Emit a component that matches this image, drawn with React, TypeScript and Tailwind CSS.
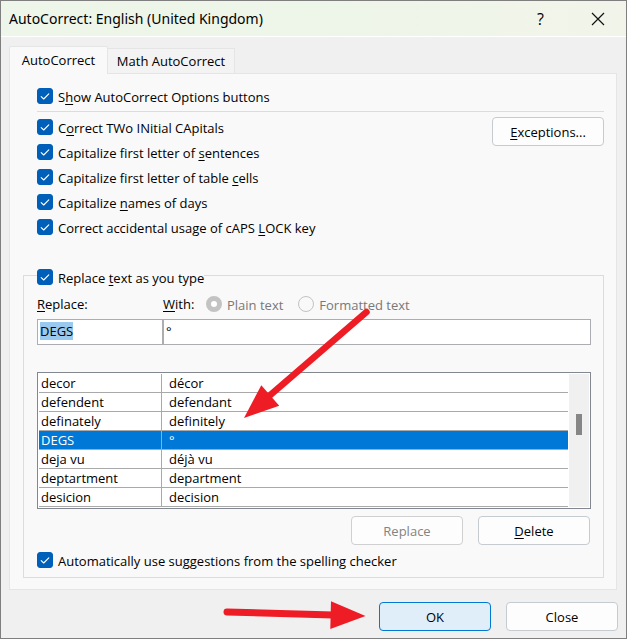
import { useEffect, useId, useRef } from "react";
import type { ReactNode } from "react";

const corrections = [
  ["decor", "décor"],
  ["defendent", "defendant"],
  ["definately", "definitely"],
  ["DEGS", "°"],
  ["deja vu", "déjà vu"],
  ["deptartment", "department"],
  ["desicion", "decision"],
];

/** Underlined access key inside a label. */
function Key({ children }: { children: ReactNode }) {
  return <span className="underline decoration-1 underline-offset-2">{children}</span>;
}

function CheckRow({ children }: { children: ReactNode }) {
  const id = useId();
  return (
    <div className="flex items-center gap-[5px]">
      <span className="grid size-4 shrink-0">
        <input
          id={id}
          type="checkbox"
          defaultChecked
          className="peer col-start-1 row-start-1 size-4 appearance-none rounded-[3px] border border-[#868686] bg-white checked:border-[#005fb8] checked:bg-[#005fb8]"
        />
        <svg
          viewBox="0 0 16 16"
          className="pointer-events-none col-start-1 row-start-1 hidden size-4 peer-checked:block"
          fill="none"
          stroke="#fff"
          strokeWidth="1.1"
          strokeLinecap="round"
          strokeLinejoin="round"
        >
          <path d="M4.2 8.6 L6.7 11 L11.8 5.8" />
        </svg>
      </span>
      <label htmlFor={id} className="pt-0.5 leading-4 whitespace-nowrap">
        {children}
      </label>
    </div>
  );
}

function RadioRow({ children, checked }: { children: ReactNode; checked?: boolean }) {
  const id = useId();
  return (
    <div className="flex items-center gap-[5px]">
      <input
        id={id}
        type="radio"
        name="format"
        disabled
        defaultChecked={checked}
        className="size-4 shrink-0 appearance-none rounded-full border border-[#c3c3c3] checked:border-[5px] checked:bg-white"
      />
      <label htmlFor={id} className="pt-0.5 leading-4 text-[#787878]">
        {children}
      </label>
    </div>
  );
}

function Button({ children, primary, disabled }: { children: ReactNode; primary?: boolean; disabled?: boolean }) {
  return (
    <button
      type="button"
      disabled={disabled}
      className={
        "h-[29px] w-28 shrink-0 rounded-[4px] border pt-px leading-4 " +
        (primary
          ? "border-[#0078d4] bg-[#e0eef9]"
          : disabled
            ? "border-[#d0d0d0] bg-[#fdfdfd] text-[#838383]"
            : "border-[#c6cbd0] bg-[#fdfdfd]")
      }
    >
      {children}
    </button>
  );
}

function Arrows() {
  return (
    <svg
      className="pointer-events-none absolute -top-px -left-px"
      width="627"
      height="639"
      viewBox="0 0 627 639"
      fill="#ee1c25"
      stroke="#ee1c25"
      aria-hidden="true"
    >
      <path d="M366.5 312 L268 397" strokeWidth="6.5" strokeLinecap="round" />
      <path d="M244 418 L261.3 385.3 L279.2 405.7 Z" stroke="none" />
      <path d="M227 612 L333 615" strokeWidth="7" strokeLinecap="round" />
      <path d="M365.5 616 L331 601.3 L330.3 629 Z" stroke="none" />
    </svg>
  );
}

export default function App() {
  const replaceRef = useRef<HTMLInputElement>(null);

  useEffect(() => {
    replaceRef.current?.focus();
    replaceRef.current?.select();
  }, []);

  return (
    <div className="relative flex min-h-screen flex-col border border-[#7f7f7f] bg-[#f0f0f0] font-['Open_Sans','Segoe_UI',sans-serif] text-[13px] text-black">
      <header className="flex h-9 items-center border-b border-white bg-linear-to-r from-[#eef5ea] via-[#edf6e8] to-[#f2f4ea] pl-2">
        <h1 className="flex-1 font-['Noto_Sans','Segoe_UI',sans-serif] text-[14px] leading-5">
          AutoCorrect: English (United Kingdom)
        </h1>
        <button type="button" aria-label="Help" className="w-[57px] text-[16px] leading-5">
          ?
        </button>
        <button type="button" aria-label="Close window" className="flex w-[57px] justify-center">
          <svg width="14" height="14" viewBox="0 0 14 14" stroke="#111" strokeWidth="1.2">
            <path d="M1 1 L13 13 M13 1 L1 13" />
          </svg>
        </button>
      </header>

      <main className="flex flex-1 flex-col px-2 pt-[9px] pb-[7px]">
        <div role="tablist" className="flex items-end">
          <button
            type="button"
            role="tab"
            aria-selected="true"
            className="relative -mb-px h-7 w-[99px] rounded-t-[2px] border border-b-0 border-[#e5e5e5] bg-[#f9f9f9] pt-px"
          >
            AutoCorrect
          </button>
          <button
            type="button"
            role="tab"
            aria-selected="false"
            className="h-[25px] w-[127px] border border-b-0 border-l-0 border-[#e5e5e5] bg-[#f3f3f3] pt-0.5"
          >
            Math AutoCorrect
          </button>
        </div>

        <section
          role="tabpanel"
          className="mr-px flex flex-1 flex-col border border-[#e5e5e5] bg-[#f9f9f9] pt-[13px] pr-3 pb-[11px] pl-[13px]"
        >
          <div className="ml-3.5 border-b border-[#dcdcdc] pb-1.5">
            <CheckRow>
              S<Key>h</Key>ow AutoCorrect Options buttons
            </CheckRow>
          </div>
          <div className="ml-3.5 flex items-start justify-between pt-[5px]">
            <div className="flex flex-col gap-[7px] pt-px">
              <CheckRow>
                C<Key>o</Key>rrect TWo INitial CApitals
              </CheckRow>
              <CheckRow>
                Capitalize first letter of <Key>s</Key>entences
              </CheckRow>
              <CheckRow>
                Capitalize first letter of table <Key>c</Key>ells
              </CheckRow>
              <CheckRow>
                Capitalize <Key>n</Key>ames of days
              </CheckRow>
              <CheckRow>
                Correct accidental usage of cAPS <Key>L</Key>OCK key
              </CheckRow>
            </div>
            <Button>
              <Key>E</Key>xceptions...
            </Button>
          </div>

          <fieldset className="mt-7 flex flex-1 flex-col border border-[#dcdcdc] pr-3 pb-2 pl-[13px]">
            <legend className="flex h-[22px] items-center pt-1">
              <CheckRow>
                Replace <Key>t</Key>ext as you type
              </CheckRow>
            </legend>

            <div className="flex items-center pt-[9px]">
              <label htmlFor="replace" className="w-[126px] leading-4">
                <Key>R</Key>eplace:
              </label>
              <label htmlFor="with" className="w-[43px] leading-4">
                <Key>W</Key>ith:
              </label>
              <div className="flex gap-[15px]">
                <RadioRow checked>Plain text</RadioRow>
                <RadioRow>Formatted text</RadioRow>
              </div>
            </div>

            <div className="mt-1.5 flex">
              <input
                id="replace"
                ref={replaceRef}
                defaultValue="DEGS"
                className="h-[26px] w-[126px] border border-[#abadb3] bg-white px-0.5 pb-0.5 caret-transparent outline-none selection:bg-[#99c9ef] selection:text-black"
              />
              <input
                id="with"
                defaultValue="°"
                className="h-[26px] min-w-0 flex-1 border border-[#abadb3] bg-white px-0.5 pb-0.5 outline-none"
              />
            </div>

            <div className="mt-[27px] flex border border-[#828790] bg-white p-px">
              <table className="flex-1 table-fixed border-separate border-spacing-0">
                <colgroup>
                  <col className="w-[123px]" />
                  <col />
                </colgroup>
                <tbody>
                  {corrections.map(([from, to]) => (
                    <tr key={from} className={from === "DEGS" ? "bg-[#0078d7] text-white" : ""}>
                      <td className="h-[19px] border-r border-b border-[#a9a9a9] px-0.5 py-0 leading-[18px]">{from}</td>
                      <td className="h-[19px] border-b border-[#a9a9a9] px-[7px] py-0 leading-[18px]">{to}</td>
                    </tr>
                  ))}
                </tbody>
              </table>
              <div className="ml-px flex w-5 bg-[#f0f0f0] px-[7px]">
                <div className="mt-10 h-[21px] w-full bg-[#868686]" />
              </div>
            </div>

            <div className="mt-[7px] flex justify-end gap-[15px] pr-px">
              <Button disabled>Replace</Button>
              <Button>
                <Key>D</Key>elete
              </Button>
            </div>
            <div className="mt-1.5">
              <CheckRow>
                Automatically use su<Key>g</Key>gestions from the spelling checker
              </CheckRow>
            </div>
          </fieldset>
        </section>

        <footer className="flex justify-end gap-[15px] pt-3">
          <Button primary>OK</Button>
          <Button>Close</Button>
        </footer>
      </main>

      <Arrows />
    </div>
  );
}
